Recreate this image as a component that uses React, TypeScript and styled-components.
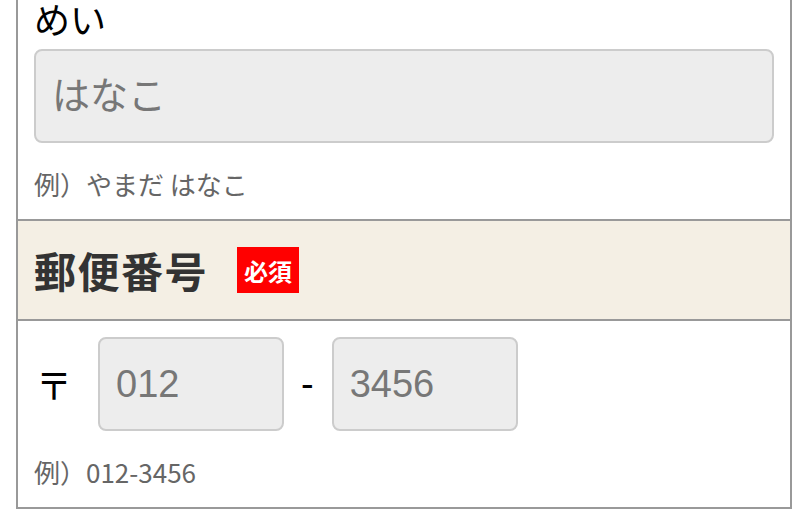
import React from "react";
import styled, { createGlobalStyle } from "styled-components";

const GlobalStyle = createGlobalStyle`
  html, body { margin: 0; padding: 0; background: #fff; }
  body {
    font-family: "Noto Sans CJK JP", "Noto Sans", sans-serif;
    color: #000;
    overflow: hidden;
  }
  * { box-sizing: border-box; }
`;

const Form = styled.div`
  margin: 0 16px;
  border-left: 2px solid #999;
  border-right: 2px solid #999;
`;

const Section = styled.div`
  padding: 0 16px 16px;
  border-bottom: 2px solid #999;
  &:not(:first-child) {
    padding-top: 16px;
  }
`;

const Label = styled.div`
  font-size: 36px;
  line-height: 36px;
  margin-bottom: 13px;
  color: #000;
`;

const TextInput = styled.input<{ $width?: number }>`
  display: block;
  width: ${(p) => (p.$width ? `${p.$width}px` : "100%")};
  height: 94px;
  padding: 0 16px;
  border: 2px solid #ccc;
  border-radius: 8px;
  background: #ededed;
  font-family: "Liberation Sans", "Noto Sans CJK JP", sans-serif;
  font-size: 38px;
  color: #333;
  outline: none;
  &::placeholder {
    color: #777;
  }
`;

const Example = styled.div`
  margin-top: 21px;
  font-size: 26px;
  line-height: 39px;
  color: #666;
`;

const Header = styled.div`
  height: 100px;
  padding: 0 16px;
  display: flex;
  align-items: center;
  background: #f4efe4;
  border-bottom: 2px solid #999;
`;

const Title = styled.h2`
  margin: 0;
  font-size: 42px;
  line-height: 1;
  font-weight: 700;
  color: #333;
  letter-spacing: 1.5px;
`;

const Badge = styled.span`
  margin-left: 29px;
  height: 46px;
  padding: 0 7px;
  display: inline-flex;
  align-items: center;
  background: #ff0000;
  color: #fff;
  font-size: 24px;
  font-weight: 700;
`;

const PostalRow = styled.div`
  display: flex;
  align-items: center;
`;

const PostMark = styled.span`
  font-size: 36px;
  line-height: 1;
  color: #000;
  margin-left: 2px;
  margin-right: 26px;
`;

const Dash = styled.span`
  font-family: "Liberation Sans", sans-serif;
  font-size: 38px;
  line-height: 1;
  color: #000;
  margin: 0 18px 0 17px;
`;

export default function App() {
  return (
    <>
      <GlobalStyle />
      <Form>
        <Section>
          <Label>めい</Label>
          <TextInput placeholder="はなこ" />
          <Example>例）やまだ はなこ</Example>
        </Section>
        <Header>
          <Title>郵便番号</Title>
          <Badge>必須</Badge>
        </Header>
        <Section>
          <PostalRow>
            <PostMark>〒</PostMark>
            <TextInput $width={186} placeholder="012" />
            <Dash>-</Dash>
            <TextInput $width={186} placeholder="3456" />
          </PostalRow>
          <Example>例）012-3456</Example>
        </Section>
      </Form>
    </>
  );
}
